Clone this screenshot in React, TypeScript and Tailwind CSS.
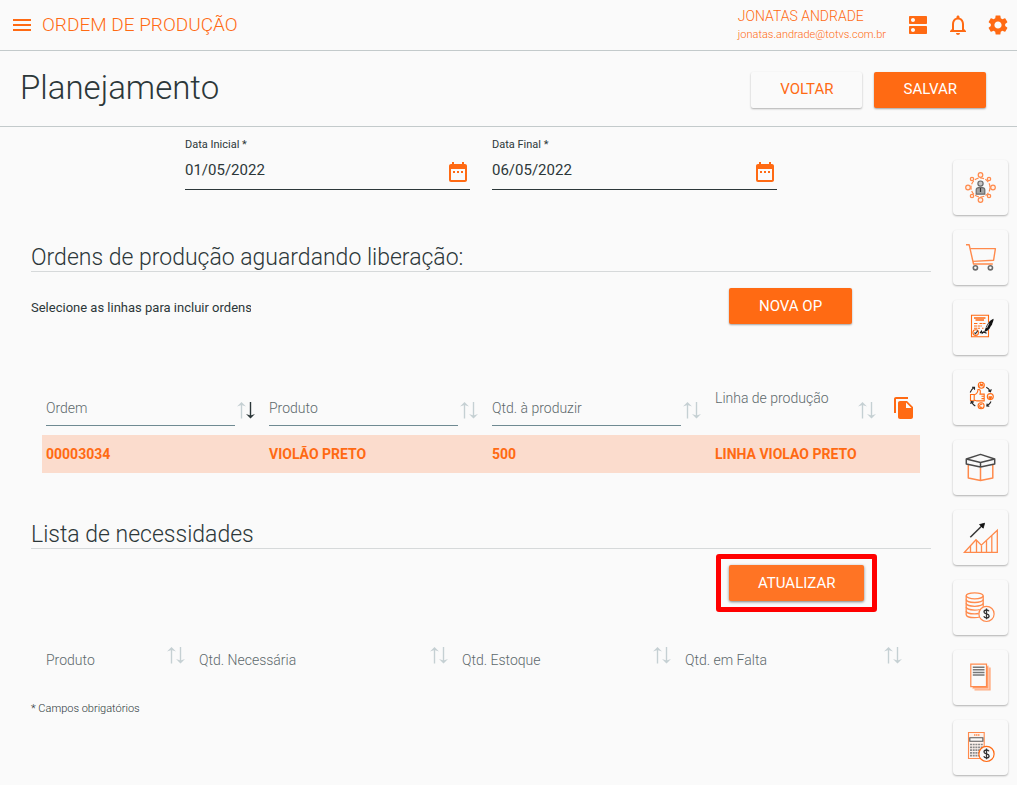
import type { ReactNode } from 'react';
import {
  MdDateRange,
  MdDns,
  MdFileCopy,
  MdMenu,
  MdNotificationsNone,
  MdSettings,
} from 'react-icons/md';

const ORANGE = '#ff8a4c';
const STRONG = '#ff6a13';
const GRAY = '#6b6b6b';

/* ── Shortcut icons, all drawn on the 55x55 card ── */

function TeamIcon() {
  const nodes = [
    [27.5, 15], [27.5, 40], [15, 27.5], [40, 27.5],
    [19, 19], [36, 19], [19, 36], [36, 36],
  ];
  return (
    <g fill="none" stroke={ORANGE} strokeWidth="1.2">
      <circle cx="27.5" cy="27.5" r="9.5" strokeDasharray="4 1.5" />
      {nodes.map(([cx, cy], i) => (
        <circle key={i} cx={cx} cy={cy} r={i < 4 ? 2.3 : 1.7} fill="#fdf0e8" />
      ))}
      <path d="M23.2 34.2v-4.4c0-1.6 1.6-2.4 4.3-2.4s4.3.8 4.3 2.4v4.4z" fill="#a3a3a3" stroke={GRAY} />
      <circle cx="27.5" cy="23.6" r="2.6" fill="#c4c4c4" stroke={GRAY} />
      <path d="M27.5 28v4" stroke="#333" />
    </g>
  );
}

function CartIcon() {
  return (
    <g fill="none" strokeWidth="1.4" strokeLinejoin="round">
      <path d="M13 14.8h3.2l4.3 19.2h19.3" stroke={ORANGE} />
      <path d="M17.2 18.6h25.2l-1.8 11.6-20.6 1.2" stroke={ORANGE} />
      <circle cx="22.4" cy="37.8" r="2.1" stroke={GRAY} strokeWidth="1.6" />
      <circle cx="37.4" cy="37.8" r="2.1" stroke={GRAY} strokeWidth="1.6" />
    </g>
  );
}

function ContractIcon() {
  return (
    <g fill="none" stroke={STRONG} strokeWidth="1.1">
      <path d="M35.5 30v6.7H18.5V15.2h17v7.3" />
      <path d="M21 18h11.5M22.5 20h8.5" strokeWidth="1.5" />
      <path d="M21 23.5h4M26.5 23.5h6M21 26h8M21 28.3h6M29 28.3h1.5" strokeDasharray="3 0.6" />
      <circle cx="22.7" cy="32.6" r="2.8" fill="#fafafa" />
      <path d="M21.4 32.6l1.1 1.1 2.4-3" stroke="#333" />
      <path d="M40.6 18.8c-3 .8-6.4 4.8-7.8 8.6l-1.6 4.6c3-.8 5-2.2 6-4.4-.4-.6 1-1.4 2-3.4-.4-.6 1.6-3 1.4-5.4z" fill="#111" stroke="none" />
      <path d="M35.8 23.5l-2.2 4.5" stroke="#fafafa" strokeWidth="0.8" />
      <path d="M27 33.2l1.5-2 .6 2 1.5-1.2 3 1.2" stroke="#111" />
    </g>
  );
}

function QualityIcon() {
  return (
    <g fill="none" stroke={STRONG} strokeWidth="1.1">
      <path d="M17.5 24.5h3.7v6.3h-3.7z" />
      <path d="M21.2 24.8c2.6-.8 3.6-2.6 3.8-5.3 2.4-.4 2.8 1.6 2 4.6h4.2v6.8h-7.4l-2.6-.9M28.5 26.3h2.7M28.5 28.6h2.7" />
      <circle cx="28.3" cy="15.3" r="3" />
      <path d="M26.6 16.6l1-2.6.8 1.6.8-1.6 1 2.6" />
      <circle cx="37.3" cy="26.6" r="3" />
      <path d="M35.5 27h3.6M36.2 28.3h2.2" strokeWidth="1.4" />
      <circle cx="28.1" cy="35.8" r="3" />
      <path d="M29.3 34.5c-1.6-.8-2.6 0-2.6 1.3s1 2.1 2.6 1.3" />
      <g stroke="#222">
        <path d="M17.2 22.5c.6-2 1.8-3.6 3.5-4.8M19 17.2h2.5v2.5" />
        <path d="M33.3 17.3c1.8 1 3 2.2 3.9 3.9M38.3 19.2l-.9 2.5-2.2-.9" />
        <path d="M38 31.5c-.8 1.9-2 3.2-3.7 4.3M36.3 36.3l-2.5-.2.4-2.4" />
        <path d="M22.3 36c-1.8-1.2-2.9-2.4-3.7-4.1M17.8 34l.5-2.6 2.5.7" />
      </g>
    </g>
  );
}

function BoxIcon() {
  return (
    <g fill="none" strokeLinejoin="round" strokeWidth="1.5">
      <path d="M15.3 25v13l12.2 2.5L39.8 38V25M27.5 27.5v13" stroke={ORANGE} />
      <path d="M13.3 19l14.2-4.6L41.7 19l-14.2 3.6zM13.3 19v5l14.2 3 14.2-3v-5M27.5 22.6V27" stroke="#4a4a4a" />
    </g>
  );
}

function GrowthIcon() {
  return (
    <g fill="none" stroke={ORANGE} strokeWidth="1.3">
      <path d="M11.5 42.3L23 29.8l5.3 5.4 16-15v22.1z" />
      <path d="M17.5 36v6M23.5 30.5v11.5M28.5 35.5v6.5M33.5 30.5v11.5M38.8 25.5v16.5" />
      <path d="M17.3 27.3L29 15.8" stroke="#333" strokeWidth="1.5" />
      <path d="M31.6 13.2l-1.4 5-3.7-3.6z" fill="#111" stroke="#111" strokeWidth="0.8" />
    </g>
  );
}

function DollarCoin({ color }: { color: string }) {
  return (
    <g>
      <circle cx="33.5" cy="33.9" r="7.6" fill="#fafafa" stroke={color} strokeWidth="1.2" />
      <path
        d="M36 31.3c-.5-.9-1.4-1.3-2.5-1.3-1.5 0-2.5.8-2.5 1.9 0 2.7 5.1 1.2 5.1 4 0 1.2-1.1 1.9-2.6 1.9-1.3 0-2.3-.6-2.7-1.6M33.5 28.5v10.8"
        fill="none"
        stroke="#333"
        strokeWidth="1.3"
      />
    </g>
  );
}

function FinanceIcon() {
  return (
    <>
      <g fill="none" stroke={ORANGE} strokeWidth="1.3">
        <ellipse cx="21.7" cy="15.8" rx="8.5" ry="3" />
        <path d="M13.2 15.8v18.9c0 1.7 3.8 3 8.5 3 2 0 3.5-.2 5-.7M30.2 15.8v11" />
        <path d="M13.2 19.5c0 1.7 3.8 3 8.5 3s8.5-1.3 8.5-3M13.2 23.3c0 1.7 3.8 3 8.5 3s8.5-1.3 8.5-3M13.2 27.1c0 1.7 3.8 3 8.5 3 2 0 3.6-.2 5-.6M13.2 30.9c0 1.7 3.8 3 8.5 3 1.5 0 2.8-.1 4-.4" />
      </g>
      <DollarCoin color={ORANGE} />
    </>
  );
}

function ReportsIcon() {
  return (
    <g fill="none">
      <path d="M21.5 17.5h16.2v23H21.5z" fill="#ffae85" />
      <path d="M19.5 15.8h16.2v23H19.5z" fill="#ff9d6b" stroke="#fde3d5" strokeWidth="0.7" />
      <path d="M17.8 14.2h15.7v22.5H17.8z" fill="#fafafa" stroke={ORANGE} strokeWidth="1.2" />
      <path d="M19.8 17.2h11.7M19.8 19.8h11.7M19.8 22.4h11.7M19.8 25h11.7" stroke="#777" strokeWidth="1.5" />
    </g>
  );
}

function CalculatorIcon() {
  return (
    <>
      <g fill="none" stroke={ORANGE} strokeWidth="1.1">
        <path d="M15.5 12.5h15.7v26H15.5z" fill="#fdf3ee" />
        <path d="M21 15h5.5" strokeWidth="1.5" strokeDasharray="1.5 0.5" />
        <path d="M16.8 17.8h13.1v3.4H16.8z" fill="#fafafa" stroke="#555" />
        <path d="M17 24.5h13M17 27.3h13M17 30.1h13M17 32.9h10M17 35.7h9" stroke="#8a8a8a" strokeWidth="1.7" strokeDasharray="2 0.7" />
      </g>
      <DollarCoin color={STRONG} />
    </>
  );
}

const shortcuts: { name: string; icon: ReactNode }[] = [
  { name: 'Equipe', icon: <TeamIcon /> },
  { name: 'Compras', icon: <CartIcon /> },
  { name: 'Contratos', icon: <ContractIcon /> },
  { name: 'Qualidade', icon: <QualityIcon /> },
  { name: 'Estoque', icon: <BoxIcon /> },
  { name: 'Vendas', icon: <GrowthIcon /> },
  { name: 'Financeiro', icon: <FinanceIcon /> },
  { name: 'Documentos', icon: <ReportsIcon /> },
  { name: 'Custos', icon: <CalculatorIcon /> },
];

function SortButton({ label, descending = false }: { label: string; descending?: boolean }) {
  const down = descending ? '#2c3739' : '#c5d0d3';
  return (
    <button type="button" aria-label={`Ordenar por ${label}`} className="shrink-0">
      <svg width="20" height="24" viewBox="0 0 20 24" fill="none">
        <path d="M6.5 22.5V8" stroke="#c5d0d3" strokeWidth="1.4" />
        <path d="M2 10.5L6.5 6l4.5 4.5L6.5 9z" fill="#c5d0d3" />
        <path d="M15.5 6v14.500" stroke={down} strokeWidth="1.4" />
        <path d="M11 18l4.500 4.500L20 18l-4.500 1.500z" fill={down} />
      </svg>
    </button>
  );
}

function DateField({ id, label, value }: { id: string; label: string; value: string }) {
  return (
    <div className="w-[285px]">
      <label htmlFor={id} className="block text-[11px] leading-5">
        {label} *
      </label>
      <div className="flex h-[35px] items-center border-b border-[#2c3739]">
        <input
          id={id}
          type="text"
          defaultValue={value}
          className="min-w-0 flex-1 bg-transparent pb-1 text-[15px] outline-none"
        />
        <button type="button" aria-label={`Abrir calendário: ${label}`} className="text-[#ff6a13]">
          <MdDateRange size={24} />
        </button>
      </div>
    </div>
  );
}

function SectionTitle({ children }: { children: ReactNode }) {
  return (
    <h2 className="border-b border-[#d6d9da] text-[23px] leading-[26px] font-light">{children}</h2>
  );
}

const primaryButton =
  'h-9 rounded-[2px] bg-[#ff6a13] text-[15px] text-white shadow-[0_1px_2px_rgba(0,0,0,0.35)]';

const filters = ['Ordem', 'Produto', 'Qtd. à produzir'];

const orders = [
  { ordem: '00003034', produto: 'VIOLÃO PRETO', quantidade: '500', linha: 'LINHA VIOLAO PRETO' },
];

export default function App() {
  return (
    <div className="min-h-screen bg-[#fafafa] font-[Roboto,sans-serif] text-[#2c3739]">
      {/* Top bar */}
      <header className="flex h-[51px] items-center border-b border-[#c3cacb] pr-[7px] pl-[10px] text-[#ff6a13]">
        <button type="button" aria-label="Menu" className="mr-2">
          <MdMenu size={24} />
        </button>
        <span className="text-[19px] leading-6 font-light">ORDEM DE PRODUÇÃO</span>
        <div className="mr-5 ml-auto">
          <p className="text-[14px] leading-5 font-light">JONATAS ANDRADE</p>
          <p className="text-[11px] leading-[18px] font-light">jonatas.andrade@totvs.com.br</p>
        </div>
        <div className="flex gap-4">
          <button type="button" aria-label="Serviços">
            <MdDns size={24} />
          </button>
          <button type="button" aria-label="Notificações">
            <MdNotificationsNone size={24} />
          </button>
          <button type="button" aria-label="Configurações">
            <MdSettings size={24} />
          </button>
        </div>
      </header>

      {/* Page title */}
      <div className="flex h-[76px] items-center border-b border-[#c3cacb] pt-0.5 pr-[31px] pl-5">
        <h1 className="flex-1 pb-1 text-[33px] leading-10 font-light">Planejamento</h1>
        <div className="flex gap-3">
          <button
            type="button"
            className="h-9 rounded-[2px] px-[29px] text-[15px] text-[#ff6a13] shadow-[0_1px_2px_rgba(0,0,0,0.3)]"
          >
            VOLTAR
          </button>
          <button type="button" className={`${primaryButton} px-[29px]`}>
            SALVAR
          </button>
        </div>
      </div>

      <div className="flex gap-[22px] pr-[9px] pl-[31px]">
        <main className="min-w-0 flex-1 pt-2">
          <div className="flex justify-center gap-[22px]">
            <DateField id="data-inicial" label="Data Inicial" value="01/05/2022" />
            <DateField id="data-final" label="Data Final" value="06/05/2022" />
          </div>

          {/* Pending orders */}
          <section className="pt-[55px]">
            <SectionTitle>Ordens de produção aguardando liberação:</SectionTitle>
            <div className="mt-4 grid grid-cols-[1fr_202px] items-center">
              <p className="w-[220px] overflow-hidden pt-1 text-[13px] leading-5 whitespace-nowrap">
                Selecione as linhas para incluir ordens
              </p>
              <div>
                <button type="button" className={`${primaryButton} px-[30px]`}>
                  NOVA OP
                </button>
              </div>
            </div>

            <div className="mt-14 px-[11px]">
              <table className="w-full table-fixed text-left text-[14px]">
                <colgroup>
                  <col className="w-[223px]" />
                  <col className="w-[223px]" />
                  <col className="w-[223px]" />
                  <col />
                  <col className="w-10" />
                </colgroup>
                <thead>
                  <tr className="h-[55px]">
                    {filters.map((name, i) => (
                      <th key={name} className="p-0 pr-[10px] pl-1 font-light">
                        <div className="flex items-center">
                          <input
                            type="text"
                            placeholder={name}
                            aria-label={name}
                            className="h-9 min-w-0 flex-1 border-b border-[#6f8a92] bg-transparent pt-0.5 font-light outline-none placeholder:text-[#5d696c]"
                          />
                          <SortButton label={name} descending={i === 0} />
                        </div>
                      </th>
                    ))}
                    <th className="p-0 pr-1 pl-1 font-light">
                      <div className="flex h-10 items-center justify-between">
                        <span className="self-start text-[#5d696c]">Linha de produção</span>
                        <SortButton label="Linha de produção" />
                      </div>
                    </th>
                    <th className="p-0 pl-3">
                      <button type="button" aria-label="Copiar" className="block text-[#ff6a13]">
                        <MdFileCopy size={24} />
                      </button>
                    </th>
                  </tr>
                </thead>
                <tbody>
                  {orders.map((order) => (
                    <tr key={order.ordem} className="h-[38px] bg-[#fbdccd] font-bold text-[#ff6a13]">
                      <td className="p-0 pl-1">{order.ordem}</td>
                      <td className="p-0 pl-1">{order.produto}</td>
                      <td className="p-0 pl-1">{order.quantidade}</td>
                      <td className="p-0 pl-1" colSpan={2}>
                        {order.linha}
                      </td>
                    </tr>
                  ))}
                </tbody>
              </table>
            </div>
          </section>

          {/* Requirements */}
          <section className="pt-[49px]">
            <SectionTitle>Lista de necessidades</SectionTitle>
            <div className="mt-4 grid grid-cols-[1fr_202px]">
              <div className="col-start-2">
                <div className="relative inline-block align-top">
                  <button
                    type="button"
                    className="h-9 rounded-[2px] bg-[#ff7424] px-[29px] text-[15px] text-white shadow-[0_1px_3px_rgba(0,0,0,0.5)]"
                  >
                    ATUALIZAR
                  </button>
                  <span className="pointer-events-none absolute -inset-x-[13px] -inset-y-[11px] rounded-[3px] border-5 border-[#ff0000]" />
                </div>
              </div>
            </div>

            <div className="mt-[35px] px-[11px]">
              <table className="w-full table-fixed text-left text-[14px]">
                <colgroup>
                  <col className="w-[153px]" />
                  <col />
                  <col className="w-[223px]" />
                  <col className="w-[239px]" />
                </colgroup>
                <thead>
                  <tr className="h-12">
                    {['Produto', 'Qtd. Necessária', 'Qtd. Estoque', 'Qtd. em Falta'].map((name, i) => (
                      <th key={name} className={`p-0 pl-1 font-light ${i === 3 ? 'pr-[18px]' : 'pr-[10px]'}`}>
                        <div className="flex items-start justify-between text-[#5d696c]">
                          <span className="leading-[38px]">{name}</span>
                          <SortButton label={name} />
                        </div>
                      </th>
                    ))}
                  </tr>
                </thead>
              </table>
            </div>
            <p className="mt-4 text-[11px] leading-[18px] font-light">* Campos obrigatórios</p>
          </section>
        </main>

        {/* Shortcuts */}
        <aside className="flex w-[55px] shrink-0 flex-col gap-[15px] pt-[33px] pb-[10px]">
          {shortcuts.map(({ name, icon }) => (
            <button
              key={name}
              type="button"
              aria-label={name}
              className="h-[55px] rounded-[4px] shadow-[0_1px_2px_rgba(0,0,0,0.3)]"
            >
              <svg width="55" height="55" viewBox="0 0 55 55">
                {icon}
              </svg>
            </button>
          ))}
        </aside>
      </div>
    </div>
  );
}
